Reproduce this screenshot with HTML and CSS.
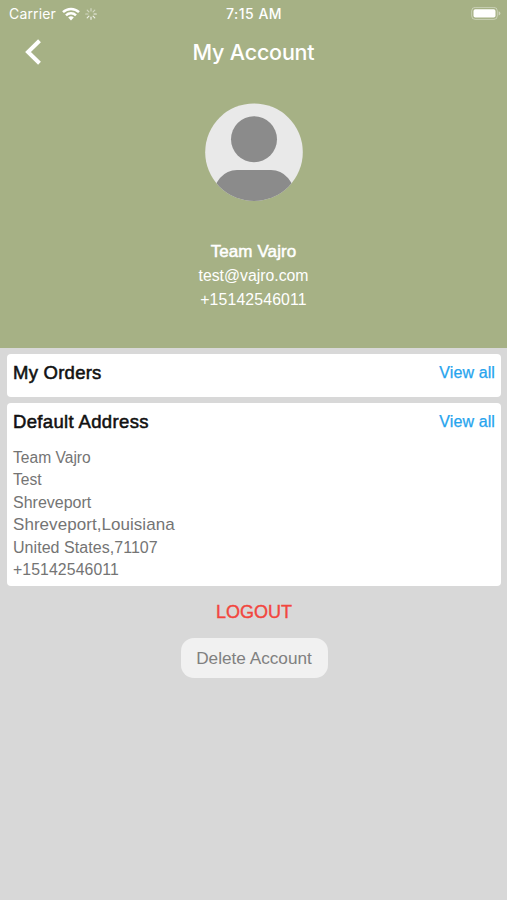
FILE: index.html
```html
<!DOCTYPE html>
<html lang="en">
<head>
<meta charset="utf-8">
<title>My Account</title>
<link rel="stylesheet" href="styles.css">
</head>
<body>
<header class="hero">
  <div class="status">
    <div class="carrier"><span>Carrier</span>
      <svg class="wifi" width="18" height="14" viewBox="0 0 18 14"><g fill="none" stroke="#fff" stroke-width="2.5"><path d="M1 5.1a11.6 11.6 0 0 1 16 0"/><path d="M4 8.3a7.2 7.2 0 0 1 10 0"/></g><path fill="#fff" d="M6.2 10.5a4.1 4.1 0 0 1 5.6 0L9 13.5z"/></svg>
      <svg class="spinner" width="12" height="12" viewBox="-6 -6 12 12" stroke="#fff" stroke-width="1.2" stroke-linecap="round"><path opacity=".5" d="M0-3V-5.3M-2.1-2.1l-1.7-1.7M-3 0h-2.3M2.1-2.1l1.7-1.7"/><path opacity=".8" d="M0 3v2.3M2.1 2.1l1.7 1.7M3 0h2.3M-2.1 2.1l-1.7 1.7"/></svg>
    </div>
    <span class="time">7:15 AM</span>
    <svg class="battery" width="30" height="14" viewBox="0 0 30 14"><rect x=".7" y=".4" width="25.6" height="12" rx="3.5" fill="none" stroke="#fff" stroke-opacity=".4"/><rect x="2.5" y="2.2" width="22" height="8.4" rx="1.8" fill="#fff"/><path d="M27.6 4.3q1.8.6 1.8 2.1t-1.8 2.1z" fill="#fff" opacity=".45"/></svg>
  </div>
  <div class="nav">
    <svg class="back" width="18" height="28" viewBox="0 0 18 28"><path d="M15.5 2.7 4 14 15.5 25.3" fill="none" stroke="#fff" stroke-width="4"/></svg>
    <h1>My Account</h1>
  </div>
  <svg class="avatar" width="98" height="98" viewBox="0 0 98 98"><defs><clipPath id="disc"><circle cx="49" cy="49.2" r="48.8"/></clipPath></defs><circle cx="49" cy="49.2" r="48.8" fill="#e9e9e9"/><g fill="#8b8b8b" clip-path="url(#disc)"><circle cx="49" cy="36.2" r="23"/><path d="M5 98Q12 67 32 67H66Q86 67 93 98z"/></g></svg>
  <div class="profile">
    <div class="name">Team Vajro</div>
    <div class="email">test@vajro.com</div>
    <div class="phone">+15142546011</div>
  </div>
</header>
<main>
  <section class="card orders">
    <div class="row"><h2>My Orders</h2><a>View all</a></div>
  </section>
  <section class="card address">
    <div class="row"><h2 class="wide">Default Address</h2><a>View all</a></div>
    <div class="lines">
      <div class="person">Team Vajro</div>
      <div class="person">Test</div>
      <div>Shreveport</div>
      <div class="city">Shreveport,Louisiana</div>
      <div class="country">United States,71107</div>
      <div class="tel">+15142546011</div>
    </div>
  </section>
  <div class="logout">LOGOUT</div>
  <button class="delete">Delete Account</button>
</main>
</body>
</html>
```

FILE: styles.css
```css
* { box-sizing: border-box; }
body {
  margin: 0;
  min-height: 900px;
  background: #d8d8d8;
  font-family: "Liberation Sans", Arial, sans-serif;
  font-size: 16px;
  white-space: nowrap;
}
.hero {
  height: 348px;
  background: #a6b185;
  color: #fff;
  display: flex;
  flex-direction: column;
  align-items: center;
}
.status {
  width: 100%;
  height: 28px;
  padding: 0 6px 0 9px;
  display: grid;
  grid-template-columns: 1fr auto 1fr;
  align-items: center;
  font: 400 14px/28px Inter, sans-serif;
}
.carrier { display: flex; align-items: center; letter-spacing: .15px; }
.carrier span { width: 53px; }
.spinner { margin-left: 5px; }
.time { font-size: 14px; font-weight: 500; letter-spacing: .5px; margin-left: -2px; }
.battery { justify-self: end; }
.nav {
  width: 100%;
  height: 48px;
  display: grid;
  grid-template-columns: 1fr auto 1fr;
  align-items: center;
}
.back { margin-left: 24px; }
h1 {
  grid-column: 2;
  margin: 0;
  font: 500 21.5px/48px Inter, sans-serif;
  letter-spacing: -.2px;
}
.avatar { margin-top: 27px; flex: none; }
.profile { margin-top: 39px; text-align: center; line-height: 24px; }
.name { font-size: 17px; letter-spacing: .1px; -webkit-text-stroke: .5px; }
.email { font-size: 15.8px; }
.phone { font-size: 15.8px; letter-spacing: .15px; }
main {
  padding: 6px 6px 0 7px;
  display: flex;
  flex-direction: column;
  align-items: center;
}
.card { width: 100%; background: #fff; border-radius: 4px; padding: 0 6px; }
.orders { height: 43px; }
.address { height: 183px; margin-top: 6px; }
.row { height: 38px; display: flex; justify-content: space-between; align-items: center; }
h2 {
  margin: 0;
  font-size: 18.5px;
  font-weight: 400;
  letter-spacing: .25px;
  color: #111;
  -webkit-text-stroke: .55px;
}
.wide { letter-spacing: .35px; }
.row a { color: #26a4ee; font-size: 16px; letter-spacing: .1px; -webkit-text-stroke: .25px; }
.lines { padding-top: 6px; color: #747474; line-height: 22.4px; }
.person { font-size: 15.6px; }
.city { font-size: 17px; letter-spacing: .05px; }
.country { letter-spacing: .05px; }
.tel { font-size: 15.8px; letter-spacing: .1px; }
.logout { margin-top: 15px; height: 22px; line-height: 22px; font-size: 18px; color: #f2463e; -webkit-text-stroke: .4px; }
.delete {
  margin-top: 15px;
  width: 147px;
  height: 40px;
  padding: 0;
  border: 0;
  border-radius: 13px;
  background: #f1f1f1;
  color: #808080;
  font: 17.2px/40px "Liberation Sans", Arial, sans-serif;
}
```
